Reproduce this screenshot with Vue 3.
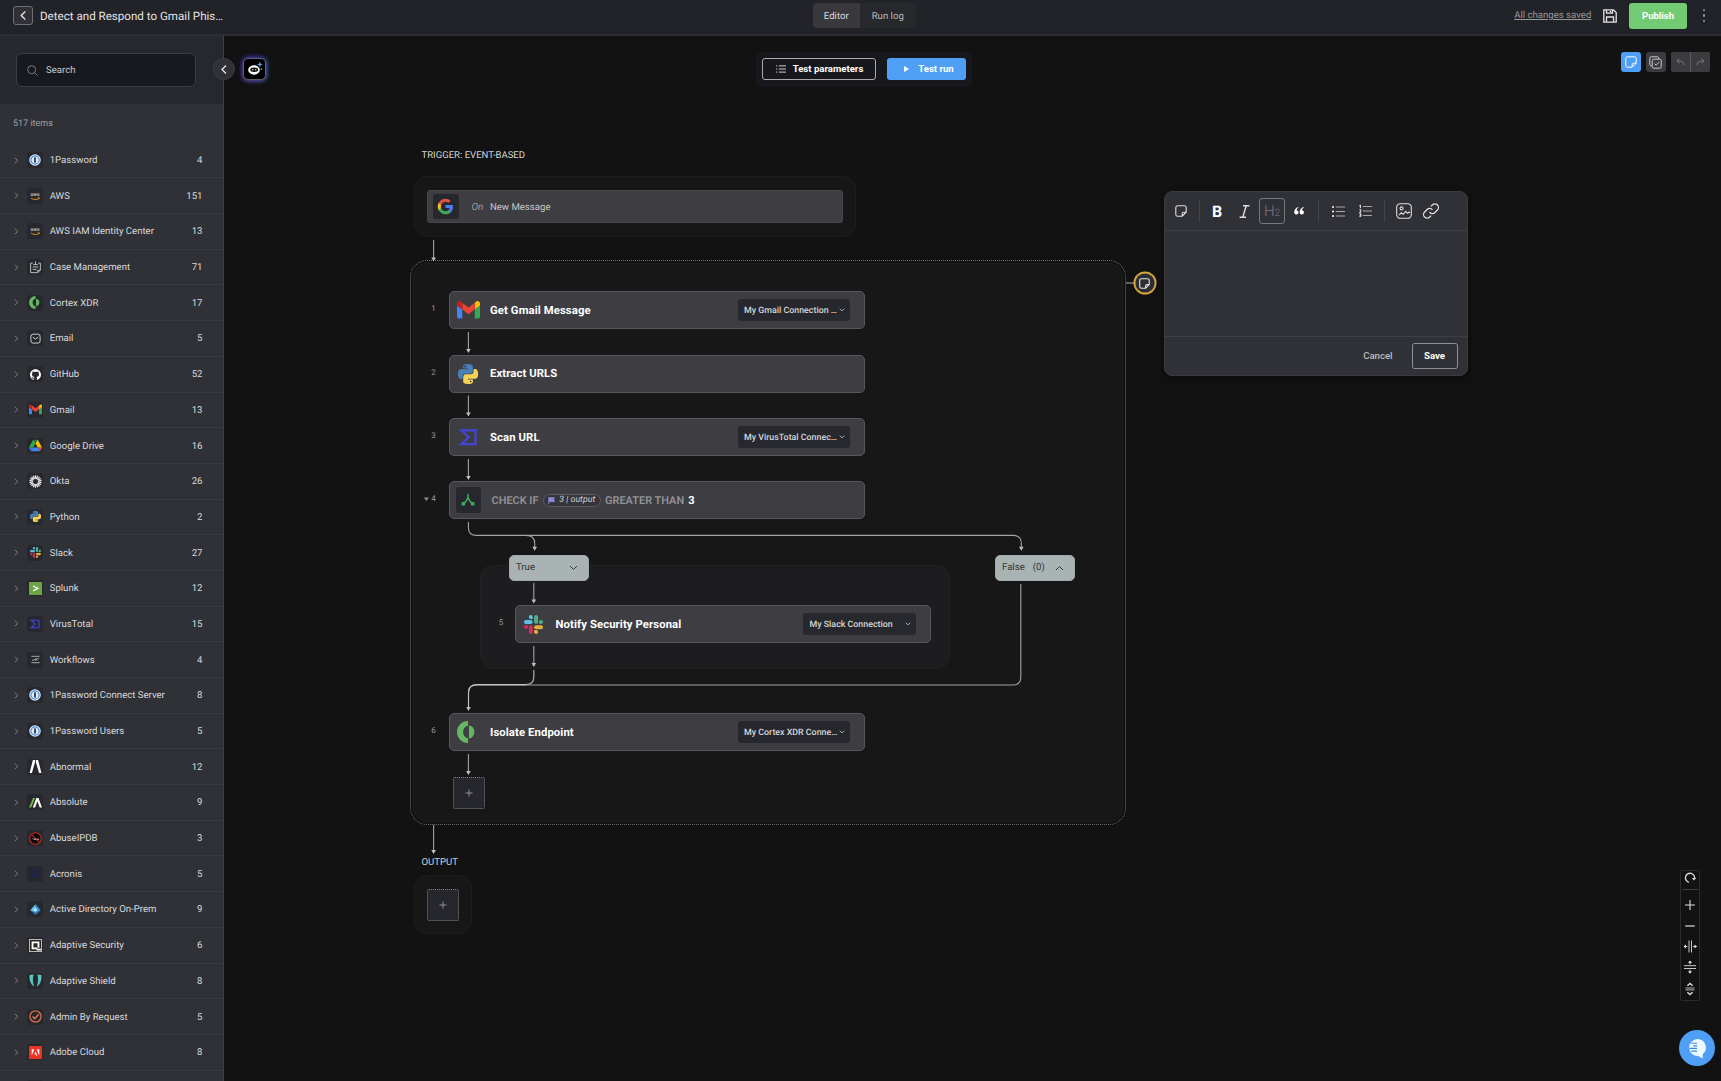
<script setup>
const python =
  '<path fill="#4a7fb5" d="M14.25.18l.9.2.73.26.59.3.45.32.34.34.25.34.16.33.1.3.04.26.02.2-.01.13V8.5l-.05.63-.13.55-.21.46-.26.38-.3.31-.33.25-.35.19-.35.14-.33.1-.3.07-.26.04-.21.02H8.77l-.69.05-.59.14-.5.22-.41.27-.33.32-.27.35-.2.36-.15.37-.1.35-.07.32-.04.27-.02.21v3.06H3.17l-.21-.03-.28-.07-.32-.12-.35-.18-.36-.26-.36-.36-.35-.46-.32-.59-.28-.73-.21-.88-.14-1.05-.05-1.23.06-1.22.16-1.04.24-.87.32-.71.36-.57.4-.44.42-.33.42-.24.4-.16.36-.1.32-.05.24-.01h.16l.06.01h8.16v-.83H6.18l-.01-2.75-.02-.37.05-.34.11-.31.17-.28.25-.26.31-.23.38-.2.44-.18.51-.15.58-.12.64-.1.71-.06.77-.04.84-.02 1.27.05z"/><path fill="#f8d254" d="M21.1 6.11l.28.06.32.12.35.18.36.27.36.35.35.47.32.59.28.73.21.88.14 1.04.05 1.23-.06 1.23-.16 1.04-.24.86-.32.71-.36.57-.4.45-.42.33-.42.24-.4.16-.36.09-.32.05-.24.02-.16-.01h-8.22v.82h5.84l.01 2.76.02.36-.05.34-.11.31-.17.29-.25.25-.31.24-.38.2-.44.17-.51.15-.58.13-.64.09-.71.07-.77.04-.84.01-1.27-.04-1.07-.14-.9-.2-.73-.25-.59-.3-.45-.33-.34-.34-.25-.34-.16-.33-.1-.3-.04-.25-.02-.2.01-.13v-5.34l.05-.64.13-.54.21-.46.26-.38.3-.32.33-.24.35-.2.35-.14.33-.1.3-.06.26-.04.21-.02.13-.01h5.84l.69-.05.59-.14.5-.21.41-.28.33-.32.27-.35.2-.36.15-.36.1-.35.07-.32.04-.28.02-.21V6.07h2.09l.14.01z"/><circle cx="8.7" cy="2.9" r="1" fill="#27282d"/><circle cx="15.2" cy="21" r="1" fill="#27282d"/>'
const gmail =
  '<path fill="#4285f4" d="M58 108h14V74L52 59v43c0 3.32 2.69 6 6 6"/><path fill="#34a853" d="M120 108h14c3.32 0 6-2.69 6-6V59l-20 15"/><path fill="#fbbc04" d="M120 48v26l20-15v-8c0-7.42-8.47-11.65-14.4-7.2"/><path fill="#ea4335" d="M72 74V48l24 18 24-18v26L96 92"/><path fill="#c5221f" d="M52 51v8l20 15V48l-5.6-4.2c-5.94-4.45-14.4-.22-14.4 7.2"/>'
const slack =
  '<g fill="#5fbfe8"><rect x="0" y="6.3" width="11" height="5" rx="2.5"/><path d="M8.6 0a2.4 2.4 0 0 1 2.4 2.4V5H8.6a2.5 2.5 0 0 1 0-5"/></g><g fill="#4fb286"><rect x="12.8" y="0" width="5" height="11.2" rx="2.5"/><path d="M24 8.7a2.5 2.5 0 0 1-2.5 2.5H19V8.7a2.5 2.5 0 0 1 5 0"/></g><g fill="#e3b03c"><rect x="12.8" y="12.9" width="11.2" height="5" rx="2.5"/><path d="M15.3 24a2.5 2.5 0 0 1-2.5-2.5V19h2.5a2.5 2.5 0 0 1 0 5"/></g><g fill="#d22f5c"><rect x="6.2" y="12.9" width="5" height="11.1" rx="2.5"/><path d="M0 15.3a2.5 2.5 0 0 1 2.5-2.4H5v2.4a2.5 2.5 0 0 1-5 0"/></g>'
const virus = '<path fill="none" stroke="#4245d8" stroke-width="2.8" d="M3 3h18.5v18H3l9.5-9z"/>'
const cortex =
  '<path fill="#63b861" d="M12 0v5.2a7 7 0 0 0 0 13.6V24A12 12 0 0 1 12 0z"/><path fill="#63b861" d="M13 5a7.1 7.1 0 0 1 0 14z"/>'
const onepass =
  '<circle cx="12" cy="12" r="11.5" fill="#e9f1fa"/><circle cx="12" cy="12" r="8.3" fill="#dfeaf7" stroke="#4b8fe0" stroke-width="2.4"/><rect x="10.2" y="6.6" width="3.6" height="10.8" rx="1.3" fill="#22395c"/>'
const aws =
  '<text x="12" y="12.5" text-anchor="middle" font-family="Roboto, sans-serif" font-weight="700" font-size="10" fill="#b9bcc2">aws</text><path fill="none" stroke="#d98b2b" stroke-width="1.9" d="M4 16.2c5 3.6 11 3.6 16 .6M17.5 15.6h3.2l-.8 3"/>'
const googleG =
  '<path fill="#4f7df0" d="M22.56 12.25c0-.78-.07-1.53-.2-2.25H12v4.26h5.92c-.26 1.37-1.04 2.53-2.21 3.31v2.77h3.57c2.08-1.92 3.28-4.74 3.28-8.09z"/><path fill="#3fa757" d="M12 23c2.97 0 5.46-.98 7.28-2.66l-3.57-2.77c-.98.66-2.23 1.06-3.71 1.06-2.86 0-5.29-1.93-6.16-4.53H2.18v2.84C3.99 20.53 7.7 23 12 23z"/><path fill="#f4bd2c" d="M5.84 14.09c-.22-.66-.35-1.36-.35-2.09s.13-1.43.35-2.09V7.07H2.18C1.43 8.55 1 10.22 1 12s.43 3.45 1.18 4.93l3.66-2.84z"/><path fill="#e2503f" d="M12 5.38c1.62 0 3.06.56 4.21 1.64l3.15-3.15C17.45 2.09 14.97 1 12 1 7.7 1 3.99 3.47 2.18 7.07l3.66 2.84c.87-2.6 3.3-4.53 6.16-4.53z"/>'

const sun = Array.from({ length: 18 }, (_, i) => `<rect x="10.9" y="0.6" width="2.3" height="6.6" transform="rotate(${i * 20} 12 12)"/>`).join('')

const logos = {
  python, gmail, slack, virus, cortex, onepass, aws,
  caseMgmt:
    '<g fill="none" stroke="#c6c7ca" stroke-width="1.7"><path d="M7 4H3v17.5h13l5-4.5V4h-4"/><path d="M8 6.5h8M12 1v5M7 11h10M7 15.5h7M16 21v-4h5"/></g>',
  email: '<g fill="none" stroke="#d0d1d4" stroke-width="1.8"><rect x="3.5" y="4" width="17" height="16.5" rx="4"/><path d="M7 9.5l5 3.6 5-3.6"/></g>',
  github:
    '<path fill="#fff" d="M12 .297c-6.63 0-12 5.373-12 12 0 5.303 3.438 9.8 8.205 11.385.6.113.82-.258.82-.577 0-.285-.01-1.04-.015-2.04-3.338.724-4.042-1.61-4.042-1.61C4.422 18.07 3.633 17.7 3.633 17.7c-1.087-.744.084-.729.084-.729 1.205.084 1.838 1.236 1.838 1.236 1.07 1.835 2.809 1.305 3.495.998.108-.776.417-1.305.76-1.605-2.665-.3-5.466-1.332-5.466-5.93 0-1.31.465-2.38 1.235-3.22-.135-.303-.54-1.523.105-3.176 0 0 1.005-.322 3.3 1.23.96-.267 1.98-.399 3-.405 1.02.006 2.04.138 3 .405 2.28-1.552 3.285-1.23 3.285-1.23.645 1.653.24 2.873.12 3.176.765.84 1.23 1.91 1.23 3.22 0 4.61-2.805 5.625-5.475 5.92.42.36.81 1.096.81 2.22 0 1.606-.015 2.896-.015 3.286 0 .315.21.69.825.57C20.565 22.092 24 17.592 24 12.297c0-6.627-5.373-12-12-12"/>',
  drive:
    '<path fill="#3a78e0" d="m6.6 66.85 3.85 6.65c.8 1.4 1.95 2.5 3.3 3.3l13.75-23.8h-27.5c0 1.55.4 3.1 1.2 4.5z"/><path fill="#2fa84f" d="m43.65 25-13.75-23.8c-1.35.8-2.5 1.9-3.3 3.3l-25.4 44a9.06 9.06 0 0 0 -1.2 4.5h27.5z"/><path fill="#ea4335" d="m73.55 76.8c1.35-.8 2.5-1.9 3.3-3.3l1.6-2.75 7.65-13.25c.8-1.4 1.2-2.95 1.2-4.5h-27.502l5.852 11.5z"/><path fill="#188038" d="m43.65 25 13.75-23.8c-1.35-.8-2.9-1.2-4.5-1.2h-18.5c-1.6 0-3.15.45-4.5 1.2z"/><path fill="#4285f4" d="m59.8 53h-32.3l-13.75 23.8c1.35.8 2.9 1.2 4.5 1.2h50.8c1.6 0 3.15-.45 4.5-1.2z"/><path fill="#fbbc04" d="m73.4 26.5-12.7-22c-.8-1.4-1.95-2.5-3.3-3.3l-13.75 23.8 16.15 28h27.45c0-1.55-.4-3.1-1.2-4.5z"/>',
  okta: `<g fill="#e6e6e8">${sun}</g>`,
  splunk: '<rect width="24" height="24" fill="#6da544"/><path fill="none" stroke="#fff" stroke-width="2.3" d="M7.5 7.5l9 4.3-9 4.6"/>',
  workflows: '<path fill="none" stroke="#d0d1d4" stroke-width="2" d="M1 3.5h22M1 20.500h22M3 14h5l2-3h3l2 3M12 15l3-5h6"/>',
  abnormal: '<path fill="#fff" d="M7.2 0h4v3.8L5.4 24H1zM12.6 0h4.2L23 24h-4.4l-6-20.2z"/>',
  absolute: '<path fill="#73b843" d="M7.5 3.5h3.7L4 21H0z"/><path fill="#fff" d="M13.5 3.5h4L24 21h-4.2l-4.3-11.5L11.2 21H7z"/>',
  abuse:
    '<circle cx="12" cy="12" r="10.6" fill="#0b0b0c" stroke="#c22b24" stroke-width="2"/><path fill="#d4d4d4" d="M4.5 11.5c3 1 8 1.2 14.5 1l-1 2c-5 .8-9.500 0-13.500-3z"/><path stroke="#c22b24" stroke-width="2" d="M4.5 4.5l15 15"/>',
  acronis: '<path fill="none" stroke="#1d2350" stroke-width="2.6" d="M3 22L12 3l9 19M6 17l12-4M6.500 13.500l11 3.500"/>',
  ad: '<path fill="#6cc4ee" d="M12 2L2.500 13.500 12 20z"/><path fill="#3a93d6" d="M12 2l9.500 11.500L12 20z"/><path fill="#2f78c0" d="M2.500 13.500L12 22l9.500-8.500L12 17z"/><path fill="#bfe7fb" d="M12 8l-3.500 5.500L12 16l3.500-2.500z"/>',
  adaptive:
    '<rect x=".8" y=".8" width="22.400" height="22.400" fill="#2b2b26" stroke="#cfcfc6" stroke-width="1.6"/><path fill="none" stroke="#fff" stroke-width="3.400" d="M17.500 16V6.300h-11v11h9M14 19.500h8"/>',
  shield: '<path fill="#58c4bd" d="M1 2l7.500-1.200c-2.200 7-1.500 15 1 22.400C3.500 20 0 12 1 2zM23 2l-7.500-1.200c2.200 7 1.500 15-1 22.400C20.500 20 24 12 23 2z"/>',
  admin: '<g fill="none" stroke="#dd7350"><circle cx="12" cy="12" r="10.300" stroke-width="2.400"/><path stroke-width="2.800" d="M6.500 12l4 4 7.500-8"/></g>',
  adobe: '<rect width="24" height="24" fill="#ea3323"/><path fill="#fff" d="M5 6h4.800L5 17.500zM19 6h-4.800L19 17.500zM12 9.800l3.300 7.700h-2.200l-1-2.500H9.800z"/>',
  none: ''
}
const boxes = { gmail: '52 42 88 66', drive: '0 0 87.3 78' }

const apps = [
  ['1Password', 4, 'onepass'], ['AWS', 151, 'aws'], ['AWS IAM Identity Center', 13, 'aws'],
  ['Case Management', 71, 'caseMgmt'], ['Cortex XDR', 17, 'cortex'], ['Email', 5, 'email'],
  ['GitHub', 52, 'github'], ['Gmail', 13, 'gmail'], ['Google Drive', 16, 'drive'], ['Okta', 26, 'okta'],
  ['Python', 2, 'python'], ['Slack', 27, 'slack'], ['Splunk', 12, 'splunk'], ['VirusTotal', 15, 'virus'],
  ['Workflows', 4, 'workflows'], ['1Password Connect Server', 8, 'onepass'], ['1Password Users', 5, 'onepass'],
  ['Abnormal', 12, 'abnormal'], ['Absolute', 9, 'absolute'], ['AbuseIPDB', 3, 'abuse'], ['Acronis', 5, 'acronis'],
  ['Active Directory On-Prem', 9, 'ad'], ['Adaptive Security', 6, 'adaptive'], ['Adaptive Shield', 8, 'shield'],
  ['Admin By Request', 5, 'admin'], ['Adobe Cloud', 8, 'adobe'], ['', '', 'none']
].map(([name, count, logo]) => ({ name, count, logo }))
const small = { cortex: 13, onepass: 12, aws: 12, caseMgmt: 13, email: 13, github: 11, python: 11, slack: 11, virus: 10, workflows: 9 }

const steps = [
  { n: 1, x: 449, y: 291, title: 'Get Gmail Message', conn: 'My Gmail Connection …', logo: 'gmail', w: 23, h: 17.5 },
  { n: 2, x: 449, y: 354.6, title: 'Extract URLS', logo: 'python', w: 20, h: 20 },
  { n: 3, x: 449, y: 418, title: 'Scan URL', conn: 'My VirusTotal Connec…', logo: 'virus', w: 18.5, h: 18.5 },
  { n: 5, x: 514.5, y: 605, title: 'Notify Security Personal', conn: 'My Slack Connection', logo: 'slack', w: 19, h: 19 },
  { n: 6, x: 449, y: 713, title: 'Isolate Endpoint', conn: 'My Cortex XDR Conne…', logo: 'cortex', w: 22, h: 22 }
]
const arrows = [
  [433.6, 240, 261], [468.4, 332, 352.5], [468.4, 395.5, 416], [468.4, 459, 479.5],
  [533.8, 583, 603], [533.8, 646, 666.5], [468.4, 754, 774.5], [433.6, 825, 853.5]
]
</script>

<template>
  <div class="app">
    <header class="topbar">
      <div class="left">
        <button class="back"><svg width="8" height="11" viewBox="0 0 8 11"><path d="M6.300 1.500L2.200 5.500l4.100 4" /></svg></button>
        <h1>Detect and Respond to Gmail Phis…</h1>
      </div>
      <nav class="tabs"><span class="on">Editor</span><span>Run log</span></nav>
      <div class="right">
        <a class="saved">All changes saved</a>
        <svg class="disk" width="14" height="14" viewBox="0 0 14 14"><path d="M.8.8h9.700l2.700 2.700v9.700H.8zM3.500.8v3.400h6V.8M3.500 13V8h7v5M7.500 2v1.200" /></svg>
        <button class="publish">Publish</button>
        <div class="dots"><i /><i /><i /></div>
      </div>
    </header>

    <div class="body">
      <aside class="sidebar">
        <div class="searchzone">
          <div class="search">
            <svg width="11" height="11" viewBox="0 0 11 11"><circle cx="4.700" cy="4.700" r="4" /><path d="M7.600 7.600l3 3" /></svg>
            <span>Search</span>
          </div>
        </div>
        <div class="list">
          <div class="total">517 items</div>
          <div v-for="(a, i) in apps" :key="i" class="row">
            <svg class="chev" width="5" height="7" viewBox="0 0 5 7"><path v-if="a.name" d="M1 .8l2.700 2.700L1 6.200" /></svg>
            <div class="tile">
              <svg :width="small[a.logo] || 13" :height="small[a.logo] || 13" :viewBox="boxes[a.logo] || '0 0 24 24'" v-html="logos[a.logo]" />
            </div>
            <span class="name">{{ a.name }}</span>
            <span class="count">{{ a.count }}</span>
          </div>
        </div>
      </aside>

      <main class="canvas">
        <button class="collapse"><svg width="8" height="11" viewBox="0 0 8 11"><path d="M6 1.500L2 5.500l4 4" /></svg></button>
        <div class="assistant">
          <svg width="18" height="18" viewBox="0 0 18 18">
            <ellipse cx="8" cy="10" rx="5.800" ry="4.700" fill="#fff" /><ellipse cx="8.200" cy="9.700" rx="4" ry="2.200" fill="#111" />
            <circle cx="6.700" cy="9.700" r=".7" fill="#ddd" /><circle cx="9.700" cy="9.700" r=".7" fill="#ddd" />
            <path fill="#5c9cf0" d="M13.800 1.500l.8 2.200 2.200.8-2.200.8-.8 2.200-.8-2.200-2.200-.8 2.200-.8z" /><circle cx="15.400" cy="9" r=".9" fill="#4fae6a" />
          </svg>
        </div>

        <div class="runbar">
          <button class="params">
            <svg width="10" height="8" viewBox="0 0 10 8"><path d="M0 .9h1.200M0 4h1.200M0 7.100h1.200M2.800.9H10M2.800 4H10M2.800 7.100H10" /></svg>Test parameters
          </button>
          <button class="run"><svg width="5" height="6" viewBox="0 0 5 6"><path d="M0 0l5 3-5 3z" /></svg>Test run</button>
        </div>

        <div class="tools">
          <button class="blue"><svg width="12" height="12" viewBox="0 0 12 12"><path d="M2.600.8h6.800a1.800 1.800 0 0 1 1.800 1.800v4.600l-4 4H2.600A1.800 1.800 0 0 1 .8 9.400V2.600A1.800 1.800 0 0 1 2.600.8zM7.200 11V8.800a1.600 1.600 0 0 1 1.600-1.600H11" /></svg></button>
          <button><svg width="13" height="13" viewBox="0 0 13 13"><path d="M3 9.800H2.200A1.400 1.400 0 0 1 .8 8.400V2.200A1.400 1.400 0 0 1 2.200.8h6.200a1.400 1.400 0 0 1 1.400 1.400V3" /><rect x="3.200" y="3.200" width="9" height="9" rx="1.500" /><path d="M5.700 7.700l1.500 1.500 2.800-3" /></svg></button>
          <div class="pair">
            <button><svg width="9" height="8" viewBox="0 0 9 8"><path d="M3.500 .8L1 3l2.500 2.300M1 3h3.200Q7.500 3 8.200 7" /></svg></button>
            <button><svg width="9" height="8" viewBox="0 0 9 8"><path d="M5.500 .8L8 3 5.500 5.300M8 3H4.800Q1.500 3 .8 7" /></svg></button>
          </div>
        </div>

        <div class="label trig">TRIGGER: EVENT-BASED</div>
        <div class="group g-trigger" />
        <div class="trigger">
          <div class="gbox"><svg width="17" height="17" viewBox="0 0 24 24" v-html="googleG" /></div>
          <em>On</em><span>New Message</span>
        </div>
        <div class="scope"><div class="group inner" /></div>
        <div class="group g-true" />

        <svg class="wires" width="1497" height="1045" viewBox="224 36 1497 1045">
          <g fill="none" stroke="#a3a3a3" stroke-width="1.100">
            <path d="M468.400 522v6q0 7.400 8 7.400H1013q8.300 0 8.300 8V548" />
            <path d="M526 535.400q8.700 0 8.700 8V548" />
            <path d="M533.800 670v7q0 7.700-8 7.700" stroke-width="1.300" />
            <path d="M1020.800 584v93q0 8-8 8H477q-8.500 0-8.500 8v16" />
            <path d="M526 684.600H477q-8.500 0-8.500 8v16" stroke="#c2c2c2" />
            <path d="M1126 283h8" />
            <path v-for="(a, i) in arrows" :key="i" :d="`M${a[0]} ${a[1]}V${a[2] - 3}`" />
          </g>
          <g fill="#c0c0c0">
            <path v-for="(a, i) in arrows" :key="i" :d="`M${a[0] - 2.300} ${a[2] - 3.500}h4.600l-2.300 4z`" />
            <path d="M1019 546.800h4.600l-2.300 4zM532.400 546.800h4.600l-2.300 4zM466.200 707h4.600l-2.300 4z" />
          </g>
          <path d="M423.800 497.500h5.200l-2.600 3.400z" fill="#8b8b8b" />
        </svg>

        <div v-for="s in steps" :key="s.n" class="step" :class="{ nested: s.n === 5 }" :style="{ left: s.x - 224 + 'px', top: s.y - 36 + 'px' }">
          <span class="num">{{ s.n }}</span>
          <div class="slot"><svg :width="s.w" :height="s.h" :viewBox="boxes[s.logo] || '0 0 24 24'" v-html="logos[s.logo]" /></div>
          <b>{{ s.title }}</b>
          <div v-if="s.conn" class="conn">
            <span>{{ s.conn }}</span>
            <svg width="6" height="4" viewBox="0 0 6 4"><path d="M.8.7L3 2.900 5.200.7" /></svg>
          </div>
        </div>

        <div class="step check">
          <span class="num">4</span>
          <div class="slot">
            <div class="gbox"><svg width="14" height="14" viewBox="0 0 14 14"><path d="M7 .8v3.500M7 4Q6.500 7.500 2.200 11M7 4q.5 3.500 4.800 7" fill="none" stroke="#3fae5a" stroke-width="1.400" /><path d="M.6 9l4 .3-.8 3.300H.6zM13.400 9l-4 .3.8 3.300h3.200z" fill="#3fae5a" /></svg></div>
          </div>
          <span class="kw">CHECK IF</span>
          <span class="pill"><svg width="7" height="7" viewBox="0 0 7 7"><path d="M.3.300H7L6 2.600 7 5H1.200v2H.3z" fill="#9286d8" /></svg><em>3 | output</em></span>
          <span class="kw">GREATER THAN</span>
          <strong>3</strong>
        </div>

        <div class="branch b-true"><span>True</span><svg width="9" height="6" viewBox="0 0 9 6"><path d="M1 1l3.500 3.500L8 1" /></svg></div>
        <div class="branch b-false"><span>False</span><span class="zero">(0)</span><svg width="9" height="6" viewBox="0 0 9 6"><path d="M1 5l3.500-3.500L8 5" /></svg></div>

        <div class="add a-step"><svg width="8" height="8" viewBox="0 0 8 8"><path d="M4 .5v7M.5 4h7" /></svg></div>
        <div class="label out">OUTPUT</div>
        <div class="group g-out"><div class="add"><svg width="8" height="8" viewBox="0 0 8 8"><path d="M4 .5v7M.5 4h7" /></svg></div></div>

        <div class="pin"><svg width="11" height="11" viewBox="0 0 12 12"><path d="M2.600.8h6.800a1.800 1.800 0 0 1 1.800 1.800v4.600l-4 4H2.600A1.800 1.800 0 0 1 .8 9.400V2.600A1.800 1.800 0 0 1 2.600.8zM7.200 11V8.800a1.600 1.600 0 0 1 1.600-1.600H11" /></svg></div>

        <section class="note">
          <div class="bar">
            <span class="cell kind"><svg width="12" height="12" viewBox="0 0 12 12"><path d="M2.600.8h6.800a1.800 1.800 0 0 1 1.800 1.800v4.600l-4 4H2.600A1.800 1.800 0 0 1 .8 9.400V2.600A1.800 1.800 0 0 1 2.600.8zM7.200 11V8.800a1.600 1.600 0 0 1 1.600-1.600H11" /></svg></span>
            <i class="sep" />
            <span class="cell bold">B</span>
            <span class="cell ital"><svg width="11" height="13" viewBox="0 0 11 13"><path d="M4 .8h6.400M.6 12.200H7M7.200.8L3.800 12.200" stroke-width="1.400" /></svg></span>
            <span class="cell h2"><span>H</span><small>2</small></span>
            <span class="cell"><svg width="10" height="8" viewBox="0 0 10 8"><path class="fill" d="M4.200 0C1.800.8.2 2.800.2 5.300A2.200 2.200 0 1 0 2.600 3.200C2.700 2.200 3.300 1.400 4.400.8zM9.600 0C7.200.8 5.600 2.800 5.600 5.300A2.200 2.200 0 1 0 8 3.200C8.100 2.200 8.700 1.400 9.800.8z" /></svg></span>
            <i class="sep after" />
            <span class="cell lists first"><svg width="13" height="11" viewBox="0 0 13 11"><path d="M0 1h2M0 5.500h2M0 10h2" stroke="#fff" stroke-width="1.600" /><path d="M3.800 1H13M3.800 5.500H13M3.800 10H13" stroke-width="1.200" stroke="#a9a9ac" /></svg></span>
            <span class="cell lists"><svg width="13" height="12" viewBox="0 0 13 12"><path d="M1.400 0v3.200M.3.800l1.100-.6M.4 4.700h1.500v1.400L.5 7.300h1.600M.4 8.800h1.500v2.600H.4M.6 10.100h1.300" stroke="#fff" stroke-width=".9" /><path d="M3.800 1.500H13M3.800 6H13M3.800 10.500H13" stroke-width="1.200" stroke="#a9a9ac" /></svg></span>
            <i class="sep last" />
            <span class="cell pic"><svg width="16" height="16" viewBox="0 0 16 16"><rect x=".7" y=".7" width="14.600" height="14.600" rx="3.600" /><circle cx="5.600" cy="5.400" r="1.500" /><path d="M3 12.200l2.300-2.400 1.800 1.500 2.600-3 1.800 2 1.500-1.200.8.800" /></svg></span>
            <span class="cell"><svg width="18" height="18" viewBox="0 0 24 24"><g stroke-width="1.700"><path d="M10 13.500a4.800 4.800 0 0 0 7.200.5l3.300-3.300a4.800 4.800 0 0 0-6.800-6.800l-1.900 1.900" /><path d="M14 10.500a4.800 4.800 0 0 0-7.200-.5l-3.300 3.300a4.800 4.800 0 0 0 6.800 6.800l1.900-1.900" /></g></svg></span>
          </div>
          <div class="text" />
          <div class="foot"><button class="cancel">Cancel</button><button class="save">Save</button></div>
        </section>

        <div class="zoombar">
          <svg width="12" height="15" viewBox="0 0 12 15"><path d="M4.900 11.300A4.600 4.600 0 1 1 10.500 8" stroke-width="1.300" /><path class="fill" d="M8 7h4.200L9.800 9.600z" /></svg>
          <hr />
          <svg width="12" height="30" viewBox="0 0 12 30"><path d="M6 10v10M1 15h10" stroke-width="1.100" /></svg>
          <svg width="12" height="12" viewBox="0 0 12 12"><path d="M1.200 6h9.600" stroke-width="1.200" /></svg>
          <svg width="12" height="29" viewBox="0 0 12 29"><path d="M5 8.500v12M7.500 8.500v12M0 14.500h3.500M9 14.500h3.500" stroke-width=".9" /><path class="fill" d="M-.5 14.500l2.500-2v4zM13 14.500l-2.500-2v4z" /></svg>
          <svg width="12" height="12" viewBox="0 0 12 12"><path d="M0 4.700h12M0 7.500h12M6 0v3.500M6 8.700V12" stroke-width=".9" /><path class="fill" d="M6-.5l2 2.500H4zM6 12.700l2-2.500H4z" /></svg>
          <svg width="12" height="32" viewBox="0 0 12 32"><path d="M1.500 15h9M1.500 16.900h9" stroke-width=".8" /><path d="M3.400 12.700L6 10.400l2.600 2.300M3.400 19.300L6 21.600l2.600-2.300" stroke-width="1.400" /></svg>
        </div>

        <div class="chat">
          <svg width="19" height="21" viewBox="0 0 20 22"><path d="M10 1a9 9 0 0 1 5.500 16v4.500L10.500 19A9 9 0 1 1 10 1z" fill="#eefaff" /><path d="M3.500 5.500h6M5.500 8.300h4M1.500 10.800h8M3.500 13.800h6" stroke="#3c8ae6" stroke-width="1.200" /></svg>
        </div>
      </main>
    </div>
  </div>
</template>

<style>
body { background: #121212; overflow: hidden; }
</style>

<style scoped>
.app { width: 1721px; height: 1081px; display: flex; flex-direction: column; overflow: hidden; background: #121212; color: #d8d8da; font-family: Roboto, sans-serif; font-size: 9.6px; text-rendering: geometricPrecision; }
.app * { box-sizing: border-box; }
button { font: inherit; color: inherit; background: none; border: 0; padding: 0; display: flex; align-items: center; justify-content: center; }
svg { display: block; overflow: visible; flex: none; }
.topbar { flex: none; height: 36px; background: #222328; border-bottom: 2px solid #2d2e33; display: grid; grid-template-columns: 812.5px 103px 1fr; padding-bottom: 3px; align-items: center; }
.left { display: flex; align-items: center; gap: 7.500px; padding-left: 13px; }
.back { width: 19.500px; height: 19.500px; border: 1px solid #707176; border-radius: 3px; background: #303136; }
.back svg, .collapse svg { fill: none; stroke: #e8e8e8; stroke-width: 1.300; }
h1 { margin: 0; font-size: 11.600px; font-weight: 400; color: #e2e2e4; }
.tabs { display: flex; height: 25px; border-radius: 4px; overflow: hidden; background: #27282c; }
.tabs span { flex: 1; display: flex; align-items: center; justify-content: center; color: #bababd; padding-top: 1px; }
.tabs .on { flex: 0 0 47.500px; background: #38383d; color: #dcdcde; }
.right { display: flex; align-items: center; justify-content: flex-end; padding-right: 16px; }
.saved { color: #98989c; text-decoration: underline; margin-right: 12px; font-size: 9.600px; }
.disk { fill: none; stroke: #e4e4e4; stroke-width: 1.300; margin-right: 12px; }
.publish { width: 57.500px; height: 26px; border-radius: 3px; background: #72cb72; color: #fff; font-weight: 700; font-size: 9.500px; margin-right: 16px; }
.dots { display: flex; flex-direction: column; gap: 3px; }
.dots i { width: 2.200px; height: 2.200px; border-radius: 50%; background: #9a9a9e; }
.body { flex: 1; min-height: 0; display: flex; }
.sidebar { flex: none; width: 224px; border-right: 1px solid #3f4045; display: flex; flex-direction: column; background: #303136; overflow: hidden; }
.searchzone { flex: none; height: 68px; padding: 17px 27px 0 16px; background: #27282d; }
.search { height: 34px; border: 1px solid #3c3d42; border-radius: 6px; background: #18191e; display: flex; align-items: center; padding-left: 10px; gap: 8px; color: #c8c8cb; }
.search svg { fill: none; stroke: #77787c; stroke-width: 1; }
.total { height: 38.700px; padding: 15px 0 0 13px; color: #a2a2a6; font-size: 9px; }
.row { height: 35.690px; border-bottom: 1px solid #393a3f; display: flex; align-items: center; padding: 0 20.500px 0 14px; }
.chev { fill: none; stroke: #85868a; stroke-width: 1; margin-right: 8px; }
.tile { width: 16px; height: 16px; border-radius: 3px; background: #27282d; display: flex; align-items: center; justify-content: center; margin-right: 6.700px; }
.name { flex: 1; color: #dadadc; white-space: nowrap; padding-top: 1px; }
.count { color: #dadadc; padding-top: 1px; }
.canvas { flex: 1; position: relative; background: #121212; }
.canvas > * { position: absolute; }
.collapse { left: -11px; top: 22px; width: 22px; height: 22px; border-radius: 50%; background: #303136; border: 1px solid #3c3d42; z-index: 2; }
.assistant { left: 19px; top: 22px; width: 23px; height: 22px; border-radius: 5px; background: #000; border: 1px solid #5f5f6c; display: flex; align-items: center; justify-content: center; box-shadow: 0 -2px 4px #3a36c890, -1px 1px 4px #7c2fb4b0, 1px 1px 4px #2f93a8b0; }
.runbar { left: 531.500px; top: 15.500px; width: 216.500px; height: 35px; background: #17181d; border-radius: 6px; display: flex; justify-content: space-between; align-items: center; padding: 0 6.500px; }
.runbar button { height: 22px; border-radius: 3px; color: #fff; font-weight: 700; font-size: 9.600px; padding-bottom: 1px; }
.params { width: 114px; border: 1px solid #aaaaad !important; gap: 7px; padding-left: 1px !important; }
.params svg { stroke: #cfcfd2; stroke-width: 1; }
.runbar .run { width: 79px; background: #509ff6; gap: 9.500px; padding-left: 5.500px; }
.run svg { fill: #fff; }
.tools { top: 16px; right: 11.500px; display: flex; gap: 5px; }
.tools button { width: 20px; height: 20px; border-radius: 3px; background: #3b3b40; }
.tools svg { fill: none; stroke: #c9c9cc; stroke-width: 1; }
.tools .blue { background: #509ff6; }
.tools .blue svg { stroke: #fff; }
.pair { display: flex; background: #5a5a5f; gap: 1px; border-radius: 3px; overflow: hidden; }
.pair button { width: 19px; border-radius: 0; }
.pair svg { stroke: #77777b; }
.label { font-size: 9.550px; color: #d4d4d4; line-height: 12px; white-space: nowrap; }
.trig { left: 197.500px; top: 114px; }
.out { left: 197.500px; top: 821px; }
.group { border: 1px solid #1e1e1f; background: #171717; border-radius: 13px; }
.g-trigger { left: 189.500px; top: 140px; width: 442.500px; height: 61px; }
.trigger { left: 203px; top: 153.500px; width: 416px; height: 33.500px; border-radius: 3px; background: #3d3d42; border: 1px solid #48484d; display: flex; align-items: center; padding-left: 5px; color: #c8c8ca; }
.trigger em, .trigger span { padding-top: 2px; }
.trigger em { margin: 0 6.500px 0 13px; color: #9c9ca0; font-size: 9.900px; }
.gbox { width: 25.500px; height: 25.500px; background: #27282d; border-radius: 3px; display: flex; align-items: center; justify-content: center; }
.scope { left: 186px; top: 224px; width: 716px; height: 565px; border: 1px dotted #6e6e70; border-radius: 17px; padding: 2px; }
.inner { width: 100%; height: 100%; border-radius: 14px; }
.g-true { left: 256px; top: 529px; width: 470px; height: 104px; background: #1d1d1f; border-color: #212123; }
.wires { left: 0; top: 0; }
.step { width: 416px; height: 38px; border: 1px solid #58585c; border-radius: 5px; background: #3d3d42; display: flex; align-items: center; }
.num { position: absolute; width: 14px; text-align: center; left: -23.500px; top: 11px; font-size: 8px; color: #98989b; line-height: 12px; }
.nested .num { left: -21.500px; }
.slot { width: 36.500px; display: flex; justify-content: center; }
.slot + b { font-size: 11.300px; font-weight: 700; letter-spacing: .1px; color: #fff; margin-left: 3.500px; }
.conn { margin-left: auto; margin-right: 14px; width: 112.500px; height: 22.500px; background: #27282d; border-radius: 3px; display: flex; align-items: center; justify-content: space-between; padding: 0 5px 0 6.500px; color: #d6d6d8; font-size: 8.850px; font-weight: 500; }
.conn span { padding-top: 1.500px; }
.conn svg { fill: none; stroke: #c0c0c2; stroke-width: .9; }
.check { left: 225px; top: 445px; }
.kw { color: #929296; font-size: 10.950px; font-weight: 600; }
.check .slot { margin-right: 5px; }
.pill { height: 13px; width: 58.500px; border: 1px solid #5c5c62; border-radius: 7px; background: #35363b; display: flex; align-items: center; justify-content: center; gap: 4px; margin: 0 4px; color: #d0d0d4; font-size: 8.800px; }
.check strong { color: #fff; font-size: 11.100px; margin-left: 4px; }
.branch { width: 80px; height: 26px; border-radius: 5px; background: #a9b3b3; border: 1px solid #9fa9a9; color: #303336; display: flex; align-items: center; padding: 0 10px 1px 6px; }
.branch svg { fill: none; stroke: #36393c; stroke-width: 1; margin-left: auto; }
.b-true { left: 285px; top: 519px; }
.b-false { left: 771px; top: 519px; }
.zero { margin-left: 8px; }
.add { width: 32px; height: 32px; background: #26272c; border: 1px dotted #7a7b80; border-radius: 2px; display: flex; align-items: center; justify-content: center; }
.add svg { stroke: #98989c; stroke-width: .9; }
.a-step { left: 229px; top: 740.500px; }
.g-out { left: 189.500px; top: 839px; width: 58.500px; height: 59px; display: flex; align-items: center; justify-content: center; }
.pin { left: 909.500px; top: 236px; width: 22px; height: 22px; border-radius: 50%; border: 1px solid #e3b341; box-shadow: 0 0 0 .5px #d9ab3c, inset 0 0 0 .4px #d9ab3c; background: #2c2d33; display: flex; align-items: center; justify-content: center; }
.pin svg { fill: none; stroke: #e2e2e4; stroke-width: 1.200; }
.note { left: 940px; top: 155px; width: 304px; height: 185px; border: 1px solid #3b3b3f; border-radius: 8px; background: #303136; box-shadow: 0 3px 10px #0007; display: flex; flex-direction: column; }
.bar { height: 39px; border-bottom: 1px solid #3e3f44; display: flex; align-items: center; }
.bar svg { fill: none; stroke: #dededf; stroke-width: 1.100; }
.bar .fill { fill: #fff; stroke: none; }
.cell { width: 27px; height: 26px; display: flex; align-items: center; justify-content: center; }
.kind { width: 33.500px; padding-right: 1px; }
.sep { width: 1px; height: 22px; background: #44454a; }
.first { margin-left: 6px; }
.bold { margin-left: 4px; font-weight: 700; font-size: 16px; color: #fff; }
.h2 { width: 26px; margin: 0 .5px 0 1.500px; border: 1px solid #77787c; border-radius: 3px; color: #77787c; font-weight: 300; font-size: 15px; align-items: center; }
.h2 small { font-size: 10px; margin-top: 4px; }
.after { margin-left: 5.500px; }
.last { margin-left: 5px; }
.pic { margin-left: 5.500px; }
.text { flex: 1; }
.foot { height: 39px; border-top: 1px solid #3e3f44; display: flex; align-items: center; justify-content: flex-end; gap: 19px; padding-right: 9.500px; }
.foot button { padding-bottom: 1.500px; }
.cancel { color: #bdbdc0; font-weight: 500; font-size: 9.600px; }
.save { width: 46px; height: 26px; border: 1px solid #8f9094; border-radius: 2.500px; color: #fff; font-weight: 700; font-size: 9.700px; }
.zoombar { left: 1456px; top: 834px; width: 20px; height: 131px; border: 1px solid #2b2b2c; border-radius: 2px; display: flex; flex-direction: column; align-items: center; }
.zoombar svg { fill: none; stroke: #dcdcdc; }
.zoombar .fill { fill: #dcdcdc; stroke: none; }
.zoombar hr { width: 16px; height: 1px; border: 0; margin: 2.500px 0 0; background: #3a3a3b; flex: none; }
.chat { left: 1455px; top: 994px; width: 36px; height: 36px; border-radius: 50%; background: #509ff6; display: flex; align-items: center; justify-content: center; }
</style>
